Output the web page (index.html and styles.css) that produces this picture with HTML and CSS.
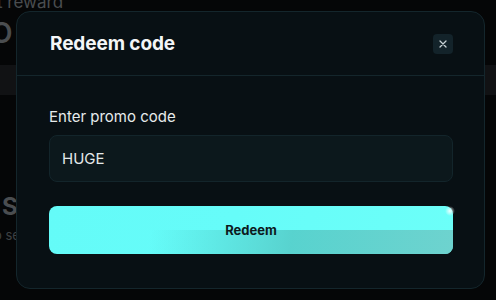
FILE: index.html
```html
<!DOCTYPE html>
<html>
<head>
<meta charset="utf-8">
<link rel="stylesheet" href="styles.css">
</head>
<body>
<div class="page">
  <div class="bg-label">t reward</div>
  <div class="bg-big">O</div>
  <div class="bg-bar"></div>
  <div class="bg-gap"></div>
  <div class="bg-s">S</div>
  <div class="bg-small">o se</div>
</div>
<div class="overlay">
  <div class="modal">
    <div class="modal-head">
      <h2 class="title">Redeem code</h2>
      <button class="close" aria-label="Close">
        <svg width="8" height="8" viewBox="0 0 8 8"><path d="M1 1L7 7M7 1L1 7" stroke="#c9d3d6" stroke-width="1.3" stroke-linecap="round"/></svg>
      </button>
    </div>
    <div class="modal-body">
      <label class="label">Enter promo code</label>
      <div class="input">HUGE</div>
      <button class="redeem"><span>Redeem</span><i class="spark"></i></button>
    </div>
  </div>
</div>
</body>
</html>
```
FILE: styles.css
```css
* { box-sizing: border-box; }
html, body { margin: 0; padding: 0; }
body {
  width: 496px; height: 300px; overflow: hidden;
  background: #050607;
  font-family: Inter, "Noto Sans", sans-serif;
  position: relative;
}
.page { display: flex; flex-direction: column; }
.bg-label { color: #4a4d50; font-size: 17px; line-height: 14px; margin-top: -5px; margin-left: -3px; }
.bg-big { color: #4a4d50; font-size: 28px; font-weight: 600; line-height: 30px; margin-top: 9px; margin-left: -9px; }
.bg-bar { height: 30px; background: #111214; margin-top: 17px; }
.bg-gap { height: 100px; }
.bg-s { color: #4a4d50; font-size: 24px; font-weight: 700; line-height: 24px; margin-left: 2px; }
.bg-small { color: #3e4144; font-size: 13px; margin-top: 8px; margin-left: -6px; }

.overlay { position: absolute; left: 16px; top: 11px; }
.modal {
  width: 469px; height: 278px;
  background: #081014;
  border: 1px solid #14262c;
  border-radius: 14px;
  display: flex; flex-direction: column;
}
.modal-head {
  height: 64px;
  border-bottom: 1px solid #14262c;
  display: flex; align-items: center; justify-content: space-between;
  padding: 0 31px 0 33px;
}
.title { margin: 0; color: #f4f6f7; font-size: 19px; font-weight: 700; letter-spacing: -0.1px; }
.close {
  width: 20px; height: 20px; border: 0; padding: 0;
  border-radius: 4px; background: #13232a;
  display: flex; align-items: center; justify-content: center;
}
.modal-body { padding: 32px 31px 0 32px; display: flex; flex-direction: column; }
.label { color: #e6ebec; font-size: 15px; line-height: 18px; }
.input {
  margin-top: 9px; height: 47px;
  background: #0c181c; border: 1px solid #13252b; border-radius: 8px;
  color: #e4e9ea; font-size: 15px; padding: 0 12px;
  display: flex; align-items: center;
}
.redeem {
  position: relative; margin-top: 24px; height: 48px; border: 0; border-radius: 8px;
  background: linear-gradient(105deg, #64fbf8 0%, #66fcf9 45%, #6cfff9 100%);
  overflow: visible;
  font-family: inherit; font-size: 13px; font-weight: 700; color: #0d1a1d;
}
.redeem::before {
  content: ""; position: absolute; left: 0; right: 0; bottom: 0; height: 24px;
  border-radius: 0 0 8px 8px;
  background: linear-gradient(95deg, rgba(80,200,195,0) 25%, rgba(84,200,196,0.8) 60%, rgba(110,206,202,0.9) 100%);
}
.redeem span { position: relative; }
.spark {
  position: absolute; right: -2px; top: 0; width: 10px; height: 10px;
  background: radial-gradient(circle, rgba(255,255,255,0.9) 0, rgba(255,255,255,0) 70%);
}
```
